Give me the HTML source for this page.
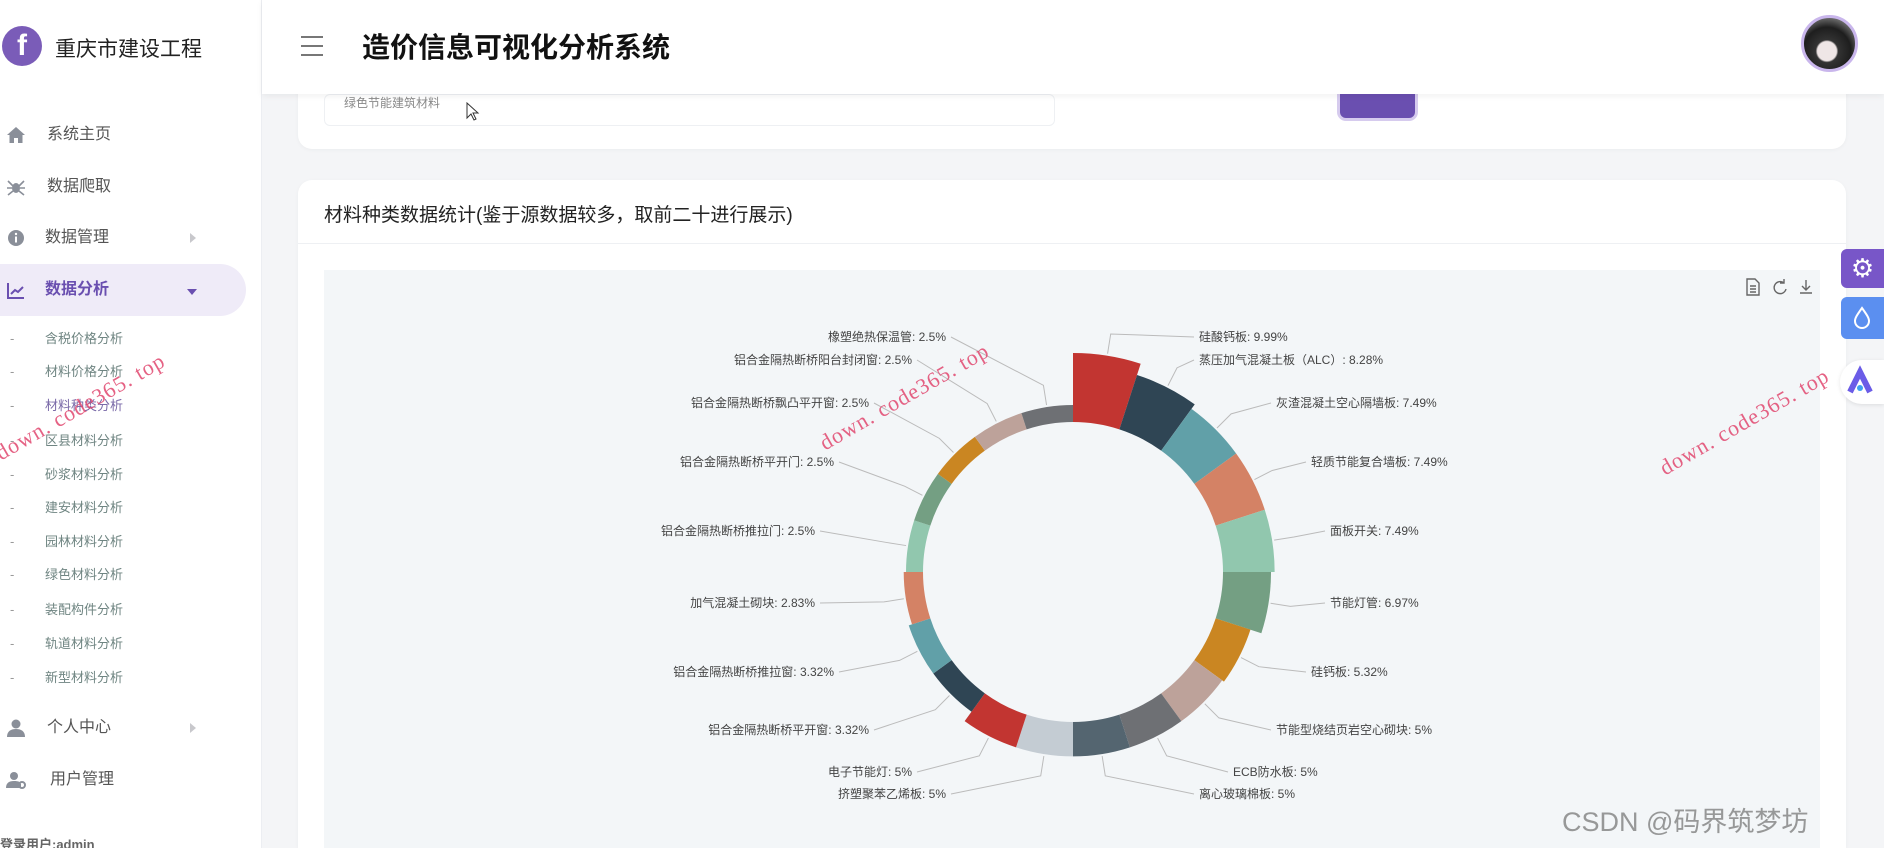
<!DOCTYPE html>
<html><head><meta charset="utf-8">
<style>
*{margin:0;padding:0;box-sizing:border-box}
html{width:1884px;height:848px;overflow:hidden}
body{width:1884px;height:848px;overflow:hidden;background:#f4f5f7;font-family:"Liberation Sans","Noto Sans CJK SC",sans-serif;position:relative}
.abs{position:absolute}
#side{left:0;top:0;width:262px;height:848px;background:#fff;border-right:1px solid #eceef2}
.logo{left:2px;top:26px;width:40px;height:40px;border-radius:50%;background:#7a5cb8;color:#fff;font:bold 30px "Liberation Sans",sans-serif;text-align:center;line-height:40px}
.brand{left:55px;top:33px;font-size:21px;color:#222}
.mi{left:0;width:262px;font-size:16px;color:#555;height:24px;line-height:24px}
.mi .ic{position:absolute;left:6px;top:2px;width:20px;height:20px}
.mi .t{position:absolute;left:47px}
.arr{position:absolute;left:190px;top:7px;width:0;height:0;border-top:5px solid transparent;border-bottom:5px solid transparent;border-left:6px solid #c8c8cc}
.sub{left:0;font-size:13px;color:#6f8582;height:20px;line-height:20px}
.sub .d{position:absolute;left:10px;color:#999}
.sub .t{position:absolute;left:45px;white-space:nowrap}
#hdr{left:262px;top:0;width:1622px;height:94px;background:#fff;box-shadow:0 2px 6px rgba(0,0,0,.06);z-index:3}
.card{background:#fff;border-radius:14px;box-shadow:0 1px 4px rgba(0,0,0,.04)}
.wm{color:rgba(225,70,110,.85);font:22px "Liberation Serif","Noto Serif CJK SC",serif;transform:rotate(-30deg);transform-origin:left bottom;white-space:nowrap;letter-spacing:1px;z-index:5}
</style></head><body>

<div id="side" class="abs">
  <div class="abs logo">f</div>
  <div class="abs brand">重庆市建设工程</div>

  <div class="abs mi" style="top:123px"><svg class="ic" viewBox="0 0 20 20"><path d="M10 2 L1 10 L3.5 10 L3.5 18 L8 18 L8 13 L12 13 L12 18 L16.5 18 L16.5 10 L19 10 Z" fill="#8a8f99"/></svg><span class="t">系统主页</span></div>
  <div class="abs mi" style="top:175px"><svg class="ic" viewBox="0 0 20 20"><ellipse cx="10" cy="11" rx="4" ry="5" fill="#8a8f99"/><path d="M2 4l5 5M18 4l-5 5M1 11h5M19 11h-5M2 18l5-4M18 18l-5-4" stroke="#8a8f99" stroke-width="1.6"/></svg><span class="t">数据爬取</span></div>
  <div class="abs mi" style="top:226px"><svg class="ic" viewBox="0 0 20 20"><circle cx="10" cy="10" r="8" fill="#8a8f99"/><rect x="9" y="8.5" width="2" height="6" fill="#fff"/><circle cx="10" cy="6" r="1.2" fill="#fff"/></svg><span class="t" style="left:45px">数据管理</span><span class="arr"></span></div>
  <div class="abs" style="left:0;top:264px;width:246px;height:52px;background:#efebf8;border-radius:0 26px 26px 0"></div>
  <div class="abs mi" style="top:278px;color:#6a4fb0;font-weight:bold"><svg class="ic" viewBox="0 0 20 20"><path d="M2 3v15h16" stroke="#6a4fb0" stroke-width="2" fill="none"/><path d="M5 14l4-4 3 2 5-5" stroke="#6a4fb0" stroke-width="2" fill="none"/></svg><span class="t" style="left:45px">数据分析</span><span style="position:absolute;left:187px;top:11px;border-left:5px solid transparent;border-right:5px solid transparent;border-top:6px solid #6a4fb0"></span></div>

  <div class="abs sub" style="top:329px"><span class="d">-</span><span class="t">含税价格分析</span></div>
  <div class="abs sub" style="top:362px"><span class="d">-</span><span class="t">材料价格分析</span></div>
  <div class="abs sub" style="top:396px"><span class="d">-</span><span class="t" style="color:#7a6aa8">材料种类分析</span></div>
  <div class="abs sub" style="top:431px"><span class="d">-</span><span class="t">区县材料分析</span></div>
  <div class="abs sub" style="top:465px"><span class="d">-</span><span class="t">砂浆材料分析</span></div>
  <div class="abs sub" style="top:498px"><span class="d">-</span><span class="t">建安材料分析</span></div>
  <div class="abs sub" style="top:532px"><span class="d">-</span><span class="t">园林材料分析</span></div>
  <div class="abs sub" style="top:565px"><span class="d">-</span><span class="t">绿色材料分析</span></div>
  <div class="abs sub" style="top:600px"><span class="d">-</span><span class="t">装配构件分析</span></div>
  <div class="abs sub" style="top:634px"><span class="d">-</span><span class="t">轨道材料分析</span></div>
  <div class="abs sub" style="top:668px"><span class="d">-</span><span class="t">新型材料分析</span></div>

  <div class="abs mi" style="top:716px"><svg class="ic" viewBox="0 0 20 20"><circle cx="10" cy="6" r="4.5" fill="#8a8f99"/><path d="M1 19c0-6 4-8 9-8s9 2 9 8z" fill="#8a8f99"/></svg><span class="t">个人中心</span><span class="arr"></span></div>
  <div class="abs mi" style="top:768px"><svg class="ic" viewBox="0 0 20 20"><circle cx="8" cy="6" r="4" fill="#8a8f99"/><path d="M0 18c0-5 3-7 8-7s6 1 7 3v4z" fill="#8a8f99"/><circle cx="16" cy="15" r="3" fill="none" stroke="#8a8f99" stroke-width="2"/></svg><span class="t" style="left:50px">用户管理</span></div>
  <div class="abs" style="left:0;top:834px;font-size:13px;color:#666;font-weight:bold">登录用户:admin</div>
</div>

<div id="hdr" class="abs">
  <svg class="abs" style="left:38px;top:35px" width="24" height="22"><path d="M1 2h22M1 11h22M1 20h22" stroke="#777" stroke-width="2"/></svg>
  <div class="abs" style="left:100px;top:26px;font-size:28px;font-weight:bold;color:#111">造价信息可视化分析系统</div>
  <div class="abs" style="left:1539px;top:15px;width:57px;height:57px;border-radius:50%;border:3px solid #c9b6ec;background:radial-gradient(circle at 45% 65%,#efe6e6 0 22%,#333 26%,#1e1e1e 55%,#bbb 100%)"></div>
</div>

<div class="abs card" style="left:298px;top:60px;width:1548px;height:89px"></div>
<div class="abs" style="left:324px;top:94px;width:731px;height:32px;border:1px solid #eef0f3;border-radius:6px;background:#fff"></div>
<div class="abs" style="left:344px;top:94px;font-size:12px;color:#888">绿色节能建筑材料</div>
<div class="abs" style="left:1340px;top:88px;width:75px;height:30px;background:#6a4fb0;border-radius:6px;box-shadow:0 0 0 3px #d6cbee"></div>
<svg class="abs" style="left:466px;top:102px" width="14" height="20"><path d="M1 1v15l4-4 3 6 2-1-3-6h5z" fill="#fff" stroke="#333"/></svg>

<div class="abs card" style="left:298px;top:180px;width:1548px;height:668px;border-radius:14px 14px 0 0"></div>
<div class="abs" style="left:324px;top:200px;font-size:19px;color:#222">材料种类数据统计(鉴于源数据较多，取前二十进行展示)</div>
<div class="abs" style="left:298px;top:243px;width:1548px;height:1px;background:#eef0f3"></div>
<div class="abs" style="left:324px;top:270px;width:1496px;height:578px;background:#f3f6f8"></div>

<svg class="abs" style="left:1744px;top:278px" width="76" height="18" fill="none" stroke="#666" stroke-width="1.4">
  <path d="M3 1h8l4 4v12H3z M6 8h6M6 11h6M6 14h6"/>
  <path d="M40 5a6 6 0 1 0 2 6M40 1v4h-4"/>
  <path d="M62 2v10M58 8l4 4 4-4M56 15h12"/>
</svg>

<svg id="chart" class="abs" style="left:0;top:0;z-index:2" width="1884" height="848"></svg>

<div class="abs" style="left:1841px;top:249px;width:43px;height:39px;background:#7856c8;border-radius:6px 0 0 6px;color:#fff;font-size:26px;text-align:center;line-height:39px">⚙</div>
<div class="abs" style="left:1841px;top:297px;width:43px;height:42px;background:#5b8ff0;border-radius:6px 0 0 6px"><svg width="43" height="42"><path d="M21 11c-5 7-7 10-7 13a7 7 0 0 0 14 0c0-3-2-6-7-13z" fill="none" stroke="#fff" stroke-width="2"/></svg></div>
<div class="abs" style="left:1840px;top:360px;width:44px;height:44px;border-radius:22px 0 0 22px;background:#fff;box-shadow:0 1px 4px rgba(0,0,0,.1)"><svg width="44" height="44"><path d="M10 32l10-20 10 20" stroke="#6b5ce7" stroke-width="6" fill="none"/><circle cx="20" cy="28" r="3" fill="#3ea0f0"/></svg></div>

<div class="abs wm" style="left:4px;top:440px">down. code365. top</div>
<div class="abs wm" style="left:828px;top:430px">down. code365. top</div>
<div class="abs wm" style="left:1668px;top:455px">down. code365. top</div>
<div class="abs" style="left:1562px;top:800px;font-size:27px;color:rgba(120,120,120,.75);z-index:6">CSDN @码界筑梦坊</div>

<script>
var data=[["硅酸钙板",9.99],["蒸压加气混凝土板（ALC）",8.28],["灰渣混凝土空心隔墙板",7.49],["轻质节能复合墙板",7.49],["面板开关",7.49],["节能灯管",6.97],["硅钙板",5.32],["节能型烧结页岩空心砌块",5],["ECB防水板",5],["离心玻璃棉板",5],["挤塑聚苯乙烯板",5],["电子节能灯",5],["铝合金隔热断桥平开窗",3.32],["铝合金隔热断桥推拉窗",3.32],["加气混凝土砌块",2.83],["铝合金隔热断桥推拉门",2.5],["铝合金隔热断桥平开门",2.5],["铝合金隔热断桥飘凸平开窗",2.5],["铝合金隔热断桥阳台封闭窗",2.5],["橡塑绝热保温管",2.5]];
var cols=["#c23531","#2f4554","#61a0a8","#d48265","#91c7ae","#749f83","#ca8622","#bda29a","#6e7074","#546570","#c4ccd3"];
var lab=[[1199,341],[1199,364],[1276,407],[1311,466],[1330,535],[1330,607],[1311,676],[1276,734],[1233,776],[1199,798],[946,798],[912,776],[869,734],[834,676],[815,607],[815,535],[834,466],[869,407],[912,364],[946,341]];
var cx=1073,cy=572,ri=150,s="";
function pt(r,a){return [cx+r*Math.sin(a),cy-r*Math.cos(a)];}
for(var i=0;i<20;i++){
 var v=data[i][1],ro=167+(v-2.5)/7.49*52;
 var a0=i*Math.PI/10,a1=(i+1)*Math.PI/10;
 var p1=pt(ri,a0),p2=pt(ro,a0),p3=pt(ro,a1),p4=pt(ri,a1);
 s+='<path d="M'+p1+' L'+p2+' A'+ro+' '+ro+' 0 0 1 '+p3+' L'+p4+' A'+ri+' '+ri+' 0 0 0 '+p1+'Z" fill="'+cols[i%11]+'"/>';
 var am=(a0+a1)/2,q1=pt(ro+2,am),q2=pt(ro+22,am),L=lab[i],right=i<10;
 var ex=right?L[0]-5:L[0]+5;
 s+='<polyline points="'+q1+' '+q2+' '+ex+','+(L[1]-4)+'" fill="none" stroke="#bbb" stroke-width="1"/>';
 s+='<text x="'+L[0]+'" y="'+L[1]+'" font-size="12" fill="#444" text-anchor="'+(right?'start':'end')+'" font-family="Liberation Sans,Noto Sans CJK SC,sans-serif">'+data[i][0]+': '+v+'%</text>';
}
document.getElementById("chart").innerHTML=s;
</script>
</body></html>
